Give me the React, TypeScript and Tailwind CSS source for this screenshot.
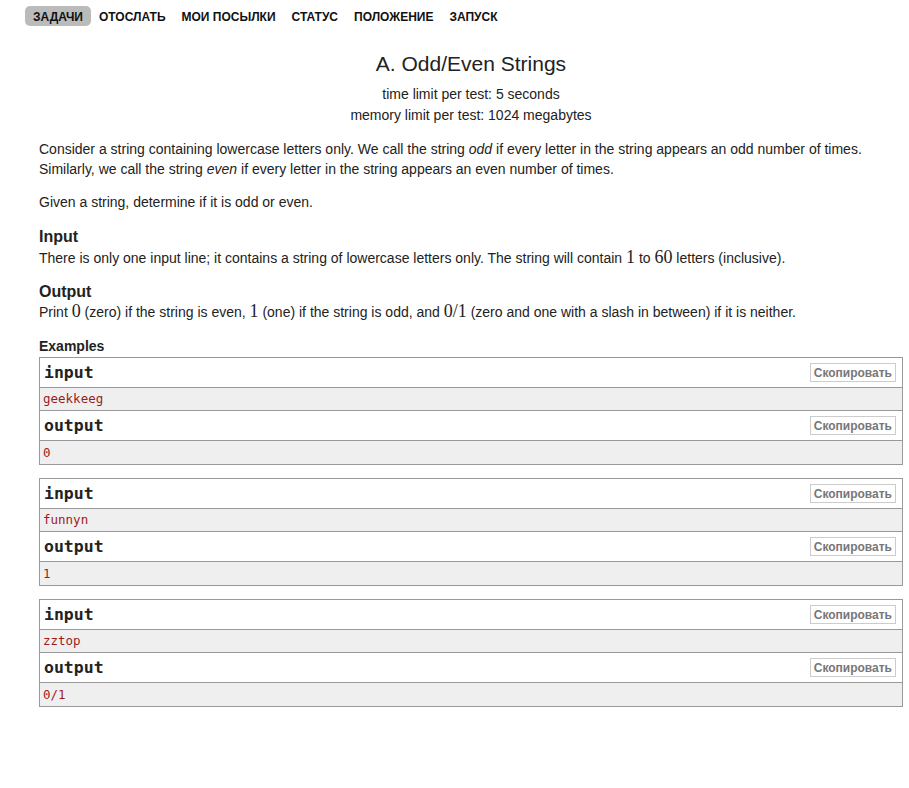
import React from "react";

const navItems = ["ЗАДАЧИ", "ОТОСЛАТЬ", "МОИ ПОСЫЛКИ", "СТАТУС", "ПОЛОЖЕНИЕ", "ЗАПУСК"];

const examples = [
  { input: "geekkeeg", output: "0" },
  { input: "funnyn", output: "1" },
  { input: "zztop", output: "0/1" },
];

function M({ children }: { children: React.ReactNode }) {
  return <span className="font-['Liberation_Serif',serif] text-[18px] leading-none">{children}</span>;
}

function ExampleBlock({ title, value, last }: { title: string; value: string; last?: boolean }) {
  return (
    <>
      <div className="h-[30px] flex items-center justify-between pl-[4px] pr-[6px] border-b border-[#999]">
        <span className="font-['DejaVu_Sans_Mono',monospace] font-bold text-[16.5px] text-[#222]">{title}</span>
        <button className="h-[19px] px-[3px] border border-[#ccc] bg-white text-[#777] font-bold text-[12px] leading-none">
          Скопировать
        </button>
      </div>
      <div
        className={
          "h-[23px] flex items-center pl-[3px] bg-[#efefef] font-['DejaVu_Sans_Mono',monospace] text-[12.5px] text-[#9b1c1c] " +
          (last ? "" : "border-b border-[#999]")
        }
      >
        {value}
      </div>
    </>
  );
}

export default function App() {
  return (
    <div className="min-h-[788px] bg-white text-[#222] font-['Liberation_Sans',Arial,sans-serif]">
      <nav className="flex items-center pl-[25px] pt-[6px]">
        {navItems.map((item, i) => (
          <span
            key={item}
            className={
              "h-[20px] flex items-center pt-px px-2 text-[12px] font-bold text-[#111] rounded-[5px] " +
              (i === 0 ? "bg-[#bbb]" : "")
            }
          >
            {item}
          </span>
        ))}
      </nav>

      <div className="mx-[39px] mr-[6px]">
        <div className="text-center mt-[24px]">
          <div className="text-[21px] leading-[28px]">A. Odd/Even Strings</div>
          <div className="mt-[6px] text-[14px] leading-[21px]">time limit per test: 5 seconds</div>
          <div className="text-[14px] leading-[21px]">memory limit per test: 1024 megabytes</div>
        </div>

        <div className="mt-[13px] text-[14px] leading-[20px]">
          <p>
            Consider a string containing lowercase letters only. We call the string <i>odd</i> if every letter in the
            string appears an odd number of times. Similarly, we call the string <i>even</i> if every letter in the
            string appears an even number of times.
          </p>
          <p className="mt-[13px]">Given a string, determine if it is odd or even.</p>

          <div className="mt-[15px] text-[16px] font-bold leading-[20px]">Input</div>
          <p className="mt-px">
            There is only one input line; it contains a string of lowercase letters only. The string will contain <M>1</M> to{" "}
            <M>60</M> letters (inclusive).
          </p>

          <div className="mt-[14px] text-[16px] font-bold leading-[20px]">Output</div>
          <p>
            Print <M>0</M> (zero) if the string is even, <M>1</M> (one) if the string is odd, and <M>0/1</M> (zero and one
            with a slash in between) if it is neither.
          </p>

          <div className="mt-[15px] font-bold leading-[18px]">Examples</div>
          <div className="flex flex-col gap-[13px] mt-[2px]">
            {examples.map((ex) => (
              <div key={ex.input} className="border border-[#999]">
                <ExampleBlock title="input" value={ex.input} />
                <ExampleBlock title="output" value={ex.output} last />
              </div>
            ))}
          </div>
        </div>
      </div>
    </div>
  );
}
